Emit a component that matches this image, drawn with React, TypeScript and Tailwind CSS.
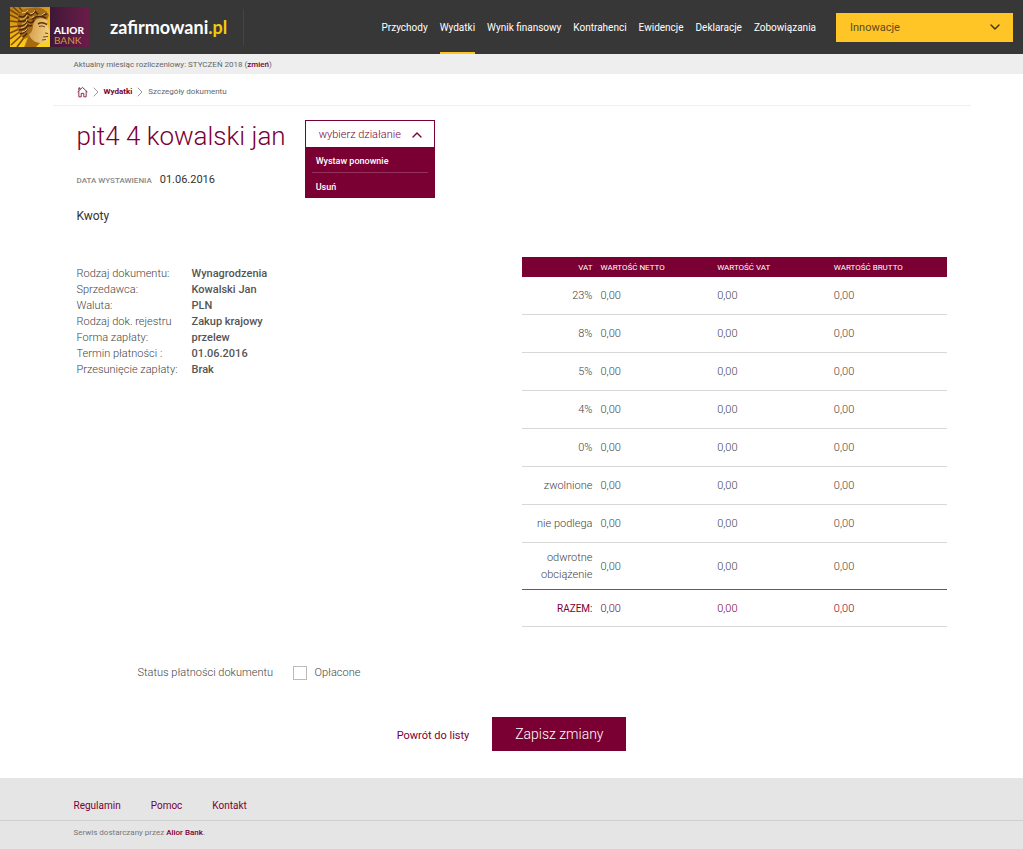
import { useState } from "react";
import { ChevronDown, ChevronRight, ChevronUp } from "lucide-react";

const navItems = [
  "Przychody",
  "Wydatki",
  "Wynik finansowy",
  "Kontrahenci",
  "Ewidencje",
  "Deklaracje",
  "Zobowiązania",
];

const details = [
  { label: "Rodzaj dokumentu:", value: "Wynagrodzenia" },
  { label: "Sprzedawca:", value: "Kowalski Jan" },
  { label: "Waluta:", value: "PLN" },
  { label: "Rodzaj dok. rejestru", value: "Zakup krajowy" },
  { label: "Forma zapłaty:", value: "przelew" },
  { label: "Termin płatności :", value: "01.06.2016" },
  { label: "Przesunięcie zapłaty:", value: "Brak" },
];

const vatRates = ["23%", "8%", "5%", "4%", "0%", "zwolnione", "nie podlega", "odwrotne obciążenie"];

function Logo() {
  return (
    <a href="#" className="flex h-10 w-[79px] shrink-0">
      <svg width="40" height="40" viewBox="0 0 40 40" aria-hidden="true">
        <defs>
          <linearGradient id="gold" x1="0" y1="0" x2="0.4" y2="1">
            <stop offset="0" stopColor="#b87c14" />
            <stop offset="0.6" stopColor="#eeb212" />
            <stop offset="1" stopColor="#fbd21a" />
          </linearGradient>
          <linearGradient id="skin" x1="0" y1="0" x2="1" y2="0.2">
            <stop offset="0" stopColor="#94591a" />
            <stop offset="0.35" stopColor="#d9a552" />
            <stop offset="1" stopColor="#f0cf85" />
          </linearGradient>
        </defs>
        <rect width="40" height="40" fill="url(#gold)" />
        <path
          d="M0 3l10 6M0 8l9 4M0 14l8 1M0 20l8-1M0 26l9-4M0 32l11-8M1 38l13-12M7 40l9-12M3 0l8 7M9 0l4 5"
          stroke="#7c430a"
          strokeWidth="1.5"
        />
        <path d="M21 11 Q28 8 37 12 L37 18 L40 25 L38 27 L38.5 29 L37 31 L37.5 34 Q34 38 29 36 L26 40 H14 L18 29 Z" fill="url(#skin)" />
        <path d="M15 40 L19 28 Q22 35 30 36 L26 40Z" fill="#a5690f" />
        <path d="M28 17 Q32 14.5 37 17.5" stroke="#5f3407" strokeWidth="1.5" fill="none" />
        <path d="M29 19.5 Q32 18 35 20 M35 26 L38 26.5 M33 30 L38 29.5 M32 33 L36 32.5" stroke="#7a4509" strokeWidth="1" fill="none" />
        <path d="M8 8 Q12 1 21 1 Q33 -2 39 8 L37 13 Q32 10 27 12 Q23 15 23 20 Q22 26 19 27 Q19 31 14 32 Q7 26 7 18 Z" fill="#a66b18" />
        <path
          d="M9 9q5 3 8-3q5 5 8-2q3 6 12 3M8 14q7 2 10-4q5 4 8 0q5-2 10 1M8 19q6 1 9-5q5 4 7-1M9 23q6 0 9-5q2 2 4 0M10 27q5-1 7-5M13 30q3-2 4-4"
          stroke="#4a290a"
          strokeWidth="1.6"
          fill="none"
        />
        <path
          d="M12 6q4 0 6-3M20 7q4 0 5-4M10 12q5 1 7-4M12 17q4 0 5-5M11 21q4 0 6-4M28 8q4 1 7-2M19 11q3 1 5-2M12 25q3 0 5-3"
          stroke="#edc25c"
          strokeWidth="1"
          fill="none"
        />
      </svg>
      <span className="flex flex-1 flex-col justify-end bg-linear-to-r from-[#3f1737] to-[#6b1c49] pb-[2px] pl-1 font-['Lato'] text-[10px] leading-[10px]">
        <span className="font-black text-white">ALIOR</span>
        <span className="text-[#d59a3f]">BANK</span>
      </span>
    </a>
  );
}

function Header() {
  return (
    <header className="flex h-[54px] items-center bg-[#373737] px-[10px]">
      <Logo />
      <a href="#" className="ml-5 flex h-9 items-center border-r border-[#444] pr-4 pl-px font-['Lato'] text-lg font-bold text-white">
        zafirmowani<span className="text-[#f0c90f]">.pl</span>
      </a>
      <nav className="ml-auto flex h-full gap-3 text-[10px] whitespace-nowrap text-white">
        {navItems.map((item) => (
          <a
            key={item}
            href="#"
            className={
              item === "Wydatki"
                ? "flex items-center border-y-2 border-t-transparent border-b-[#ffc425] pt-px"
                : "flex items-center pt-px"
            }
          >
            {item}
          </a>
        ))}
      </nav>
      <div className="relative ml-5 w-[177px]">
        <select
          aria-label="Firma"
          className="block h-[29px] w-full appearance-none bg-[#ffc425] px-[14px] pt-[3px] text-[11px] text-[#5c4a1c] focus:outline-none"
        >
          <option>Innowacje</option>
        </select>
        <ChevronDown className="pointer-events-none absolute top-[6px] right-[10px] size-4 text-[#3b3215]" strokeWidth={2} />
      </div>
    </header>
  );
}

function Breadcrumbs() {
  return (
    <nav className="flex h-8 items-center border-b border-[#f0f0f0] px-6 pt-1 text-[8px]">
      <a href="#" aria-label="Strona główna" className="text-[#7a0033]">
        <svg width="11" height="12" viewBox="0 0 12 12" fill="none" stroke="currentColor" strokeWidth="0.9">
          <path d="M0.6 6 L6 1 L11.4 6 M2 5 V11.3 H4.6 V7.5 H7.4 V11.3 H10 V5 M2 4 V1.5 H3.2 V3" />
        </svg>
      </a>
      <ChevronRight className="size-4 text-[#999]" strokeWidth={1.5} />
      <a href="#" className="font-bold text-[#7a0033]">
        Wydatki
      </a>
      <ChevronRight className="size-4 text-[#999]" strokeWidth={1.5} />
      <span className="text-[#666]">Szczegóły dokumentu</span>
    </nav>
  );
}

function ActionMenu() {
  const [open, setOpen] = useState(true);

  return (
    <div className="relative w-[130px]">
      <button
        onClick={() => setOpen(!open)}
        aria-expanded={open}
        className="flex h-7 w-full items-center justify-between border border-[#7a0033] bg-white pt-[2px] pr-[9px] pl-[13px] text-[11px] font-light text-[#7a0033]"
      >
        wybierz działanie
        <ChevronUp className="size-4" strokeWidth={2} />
      </button>
      {open && (
        <div className="absolute top-7 left-0 w-full bg-[#7a0033] px-[7px] text-[9px] font-medium text-white">
          <button className="block h-[25px] w-full border-b border-[#95325b] px-1 pt-1 text-left">Wystaw ponownie</button>
          <button className="block h-[25px] w-full px-1 pt-1 text-left">Usuń</button>
        </div>
      )}
    </div>
  );
}

function VatTable() {
  return (
    <table className="w-[425px] table-fixed border-separate border-spacing-0 text-[11px] leading-[17px] font-light text-[#444]">
      <thead className="bg-[#7a0033] text-[8px] text-white">
        <tr className="h-5">
          <th className="w-[75px] px-1 py-0 text-right font-normal">VAT</th>
          <th className="px-1 py-0 text-left font-normal">WARTOŚĆ NETTO</th>
          <th className="px-1 py-0 text-left font-normal">WARTOŚĆ VAT</th>
          <th className="px-1 py-0 text-left font-normal">WARTOŚĆ BRUTTO</th>
        </tr>
      </thead>
      <tbody className="[&>tr:last-child>td]:border-[#8c4663] [&>tr:not(:last-child)>td]:border-[#d8d8d8]">
        {vatRates.map((rate) => (
          <tr key={rate} className="h-[38px] last:h-[47px]">
            <td className="border-b px-1 text-right">{rate}</td>
            <td className="border-b px-1">0,00</td>
            <td className="border-b px-1">0,00</td>
            <td className="border-b px-1">0,00</td>
          </tr>
        ))}
      </tbody>
      <tfoot className="text-[#7a0033]">
        <tr className="h-[37px]">
          <td className="border-b border-[#d8d8d8] px-1 text-right text-[10px] font-normal">RAZEM:</td>
          <td className="border-b border-[#d8d8d8] px-1">0,00</td>
          <td className="border-b border-[#d8d8d8] px-1">0,00</td>
          <td className="border-b border-[#d8d8d8] px-1">0,00</td>
        </tr>
      </tfoot>
    </table>
  );
}

export default function App() {
  return (
    <div className="flex min-h-screen flex-col bg-white font-['Roboto',sans-serif] text-[#333]">
      <Header />
      <div className="bg-[#eee]">
        <p className="mx-auto h-5 max-w-[918px] px-[21px] text-[8px] leading-[22px] text-[#666]">
          Aktualny miesiąc rozliczeniowy: STYCZEŃ 2018 (
          <a href="#" className="font-medium text-[#7a0033]">
            zmień
          </a>
          )
        </p>
      </div>

      <main className="mx-auto w-full max-w-[918px]">
        <Breadcrumbs />
        <div className="px-6 pt-[14px]">
          <div className="flex items-start gap-[19px]">
            <h1 className="text-[26px] leading-8 font-light text-[#7a0033]">pit4 4 kowalski jan</h1>
            <ActionMenu />
          </div>
          <p className="mt-5 flex items-baseline gap-2 text-[11px] leading-4">
            <span className="text-[8px] font-medium text-[#888]">DATA WYSTAWIENIA</span>
            01.06.2016
          </p>
          <h2 className="mt-[19px] text-xs leading-4">Kwoty</h2>

          <div className="mt-[33px] flex items-start justify-between">
            <dl className="mt-[9px] grid grid-cols-[115px_auto] text-[11px] leading-4 text-[#444]">
              {details.map(({ label, value }) => (
                <div key={label} className="contents">
                  <dt className="font-light whitespace-nowrap">{label}</dt>
                  <dd className="font-medium text-[#555]">{value}</dd>
                </div>
              ))}
            </dl>
            <VatTable />
          </div>

          <div className="mt-[38px] flex items-center pl-[61px] text-[11px] leading-4 font-light text-[#444]">
            <span className="w-[155px]">Status płatności dokumentu</span>
            <label className="flex items-center gap-2">
              <input type="checkbox" className="size-[14px] appearance-none border border-[#bbb] bg-white checked:bg-[#7a0033]" />
              Opłacone
            </label>
          </div>

          <div className="mt-9 flex items-center justify-center gap-[23px] pb-[27px]">
            <a href="#" className="pt-1 text-[11px] text-[#7a0033]">
              Powrót do listy
            </a>
            <button className="h-[34px] w-[134px] bg-[#7a0033] text-sm font-light text-white">Zapisz zmiany</button>
          </div>
        </div>
      </main>

      <footer className="flex-1 bg-[#e5e5e5] pt-5">
        <div className="border-b border-[#cfcfcf]">
          <nav className="mx-auto flex h-[22px] max-w-[918px] gap-[30px] px-[21px] text-[10px] leading-[15px] text-[#7a0033]">
            <a href="#">Regulamin</a>
            <a href="#">Pomoc</a>
            <a href="#">Kontakt</a>
          </nav>
        </div>
        <p className="mx-auto max-w-[918px] px-[21px] py-1 text-[8px] leading-4 text-[#777]">
          Serwis dostarczany przez{" "}
          <a href="#" className="font-medium text-[#7a0033]">
            Alior Bank
          </a>
          .
        </p>
      </footer>
    </div>
  );
}
